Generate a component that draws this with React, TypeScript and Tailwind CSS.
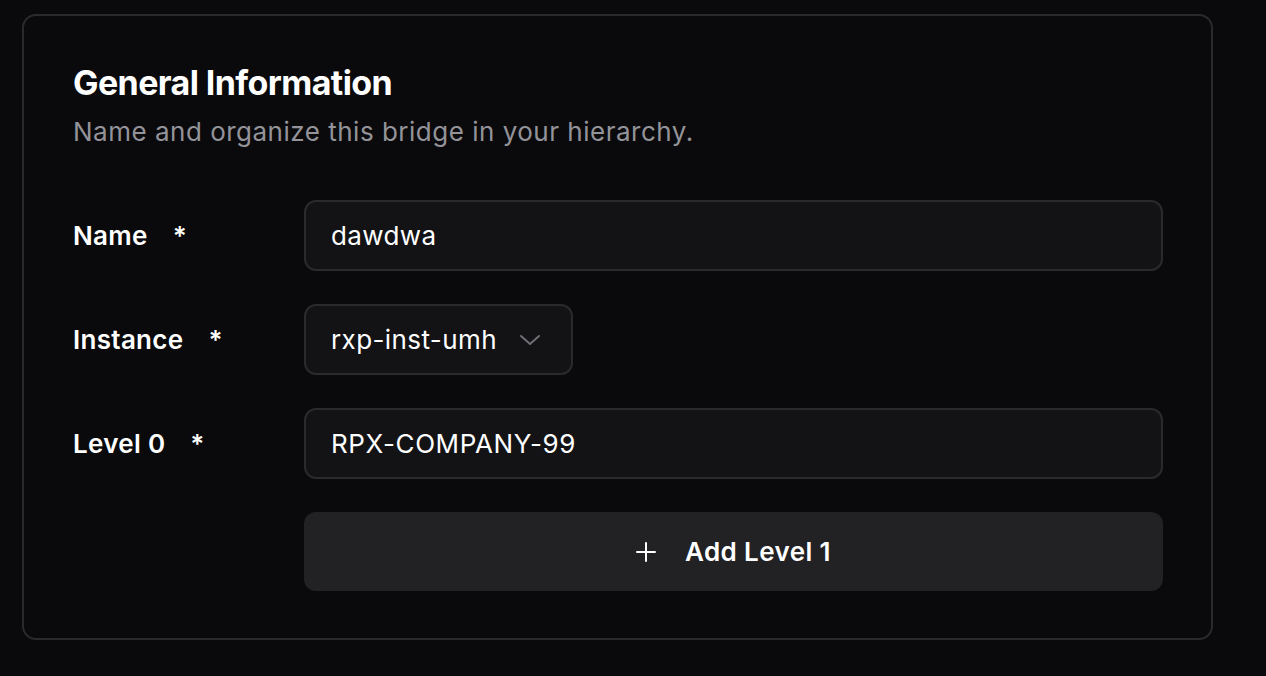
import React from 'react';

const font = { fontFamily: 'Inter, "Noto Sans", sans-serif' };

const Label = ({ text }: { text: string }) => (
  <div className="w-[231px] shrink-0 flex items-center text-[26px] font-semibold tracking-[0.3px] text-white">
    <span>{text}</span>
    <span className="ml-[25px]">*</span>
  </div>
);

const ChevronDown = () => (
  <svg width="22" height="12" viewBox="0 0 22 12" fill="none" className="ml-[22px]">
    <path d="M2 2L11 10L20 2" stroke="#6e6e74" strokeWidth="2" strokeLinecap="round" strokeLinejoin="round" />
  </svg>
);

const Plus = () => (
  <svg width="20" height="20" viewBox="0 0 20 20" fill="none" className="mr-[29px]">
    <path d="M10 1V19M1 10H19" stroke="white" strokeWidth="2" strokeLinecap="round" />
  </svg>
);

export default function App() {
  return (
    <div className="min-h-screen w-full bg-[#0a0a0c] pt-[14px] pl-[22px]" style={font}>
      <div className="w-[1191px] h-[626px] rounded-[14px] border-2 border-[#2a2a2e] bg-[#0a0a0c] pt-[47px] pl-[49px] pr-[48px]">
        {/* Header */}
        <h2 className="text-[34px] leading-[40px] font-bold tracking-[-0.6px] text-white">General Information</h2>
        <p className="mt-[13px] text-[26px] leading-[32px] tracking-[0.5px] text-[#939399]">
          Name and organize this bridge in your hierarchy.
        </p>

        {/* Fields */}
        <div className="mt-[52px] flex flex-col gap-[33px]">
          <div className="flex items-center">
            <Label text="Name" />
            <div className="flex-1 h-[71px] rounded-[12px] border-2 border-[#2a2a2e] bg-[#131316] flex items-center px-[25px] text-[26px] tracking-[0.4px] text-white">
              dawdwa
            </div>
          </div>

          <div className="flex items-center">
            <Label text="Instance" />
            <div className="w-[269px] h-[71px] rounded-[12px] border-2 border-[#2a2a2e] bg-[#131316] flex items-center pl-[25px] text-[26px] tracking-[0.4px] text-white">
              <span>rxp-inst-umh</span>
              <ChevronDown />
            </div>
          </div>

          <div className="flex items-center">
            <Label text="Level 0" />
            <div className="flex-1 h-[71px] rounded-[12px] border-2 border-[#2a2a2e] bg-[#131316] flex items-center px-[25px] text-[26px] tracking-[0.6px] text-white">
              RPX-COMPANY-99
            </div>
          </div>

          <div className="flex">
            <div className="w-[231px] shrink-0" />
            <button className="flex-1 h-[79px] rounded-[12px] bg-[#222225] flex items-center justify-center text-[26px] font-semibold tracking-[0.4px] text-white">
              <Plus />
              Add Level 1
            </button>
          </div>
        </div>
      </div>
    </div>
  );
}
